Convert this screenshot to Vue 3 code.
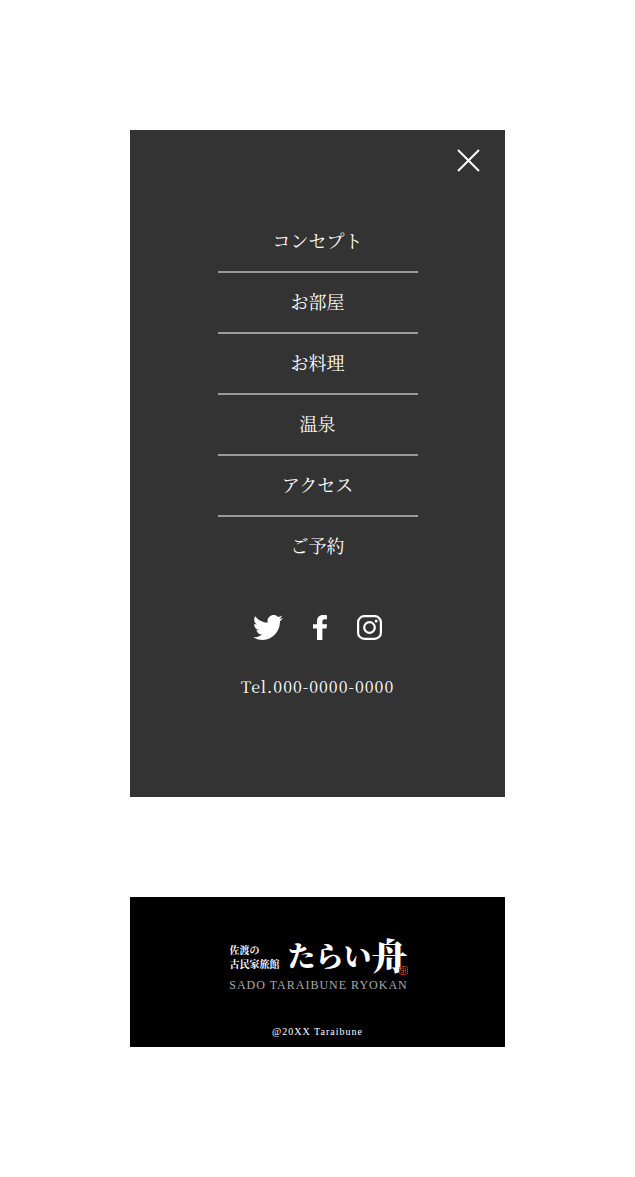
<script setup>
const menu = ['コンセプト', 'お部屋', 'お料理', '温泉', 'アクセス', 'ご予約']
</script>

<template>
  <div class="page">
    <div class="panel">
      <header class="bar">
        <button class="close" type="button" aria-label="閉じる">
          <svg width="24" height="24" viewBox="0 0 24 24" aria-hidden="true">
            <path d="M1 1 L22 22 M22 1 L1 22" stroke="#fff" stroke-width="2" fill="none" />
          </svg>
        </button>
      </header>
      <nav>
        <ul class="menu">
          <li v-for="item in menu" :key="item"><a href="#">{{ item }}</a></li>
        </ul>
      </nav>
      <div class="social">
        <a href="#" aria-label="Twitter">
          <svg width="30" height="25" viewBox="0 2.2 24 19.6" preserveAspectRatio="none" aria-hidden="true">
            <path fill="#fff" d="M23.953 4.57a10 10 0 01-2.825.775 4.958 4.958 0 002.163-2.723c-.951.555-2.005.959-3.127 1.184a4.92 4.92 0 00-8.384 4.482C7.69 8.095 4.067 6.13 1.64 3.162a4.822 4.822 0 00-.666 2.475c0 1.71.87 3.213 2.188 4.096a4.904 4.904 0 01-2.228-.616v.06a4.923 4.923 0 003.946 4.827 4.996 4.996 0 01-2.212.085 4.936 4.936 0 004.604 3.417 9.867 9.867 0 01-6.102 2.105c-.39 0-.779-.023-1.17-.067a13.995 13.995 0 007.557 2.209c9.053 0 13.998-7.496 13.998-13.985 0-.21 0-.42-.015-.63A9.935 9.935 0 0024 4.59z" />
          </svg>
        </a>
        <a href="#" aria-label="Facebook">
          <svg width="14" height="25" viewBox="0 0 14 25" aria-hidden="true">
            <path fill="#fff" d="M4 25V13.6H0V9.2h4V6.6C4 2.3 6.3 0 10 0c1.700 0 3.300.1 4 .2v4.100h-2C10 4.300 9.400 5.200 9.400 6.700v2.500H14l-.5 4.400H9.400V25z" />
          </svg>
        </a>
        <a href="#" aria-label="Instagram">
          <svg width="25" height="25" viewBox="0 0 25 25" fill="none" stroke="#fff" aria-hidden="true">
            <rect x="1.1" y="1.1" width="22.8" height="22.8" rx="6.200" stroke-width="2.200" />
            <circle cx="12.500" cy="12.500" r="5.300" stroke-width="2.200" />
            <circle cx="19.200" cy="5.900" r="1.500" fill="#fff" stroke="none" />
          </svg>
        </a>
      </div>
      <a class="tel" href="tel:00000000000">Tel.000-0000-0000</a>
    </div>

    <footer class="footer">
      <a class="logo" href="#">
        <span class="row">
          <span class="lead">佐渡の<br>古民家旅館</span>
          <span class="brush"><span>たらい</span><span class="boat">舟</span></span>
          <svg class="seal" width="9" height="9" viewBox="0 0 9 9" fill="none" stroke="#a8331a" aria-hidden="true">
            <rect x=".5" y=".5" width="8" height="8" rx="2" />
            <path d="M2 2.500h2M2 4.500h5M2 6.500h2M4.500 1v7M6.500 2v5" stroke-width=".8" />
          </svg>
        </span>
        <span class="roman">SADO TARAIBUNE RYOKAN</span>
      </a>
      <small class="copy">@20XX Taraibune</small>
    </footer>
  </div>
</template>

<style>
body {
  margin: 0;
  background: #fff;
}
</style>

<style scoped>
.page {
  display: flex;
  flex-direction: column;
  gap: 100px;
  padding: 130px;
  font-family: "Noto Serif CJK JP", "Liberation Serif", "Noto Sans CJK JP", serif;
  color: #fff;
}
a {
  color: inherit;
  text-decoration: none;
}
.panel {
  display: flex;
  flex-direction: column;
  align-items: center;
  padding-bottom: 100px;
  background: #333;
}
.bar {
  display: flex;
  justify-content: flex-end;
  align-self: stretch;
  padding: 19px 24px 39px;
}
.close {
  display: flex;
  padding: 0;
  border: 0;
  background: none;
  cursor: pointer;
}
.menu {
  width: 200px;
  margin: 0;
  padding: 0;
  list-style: none;
}
.menu li + li {
  border-top: 2px solid #999;
}
.menu a {
  display: block;
  padding-bottom: 2px;
  font-size: 18px;
  line-height: 57px;
  text-align: center;
}
.social {
  display: flex;
  gap: 30px;
  margin-top: 39px;
}
.social a {
  display: flex;
}
.tel {
  margin-top: 37px;
  font-size: 16px;
  line-height: 20px;
  letter-spacing: 1px;
}
.footer {
  display: flex;
  flex-direction: column;
  align-items: center;
  padding: 38px 0 8px;
  background: #000;
}
.logo {
  display: flex;
  flex-direction: column;
  align-items: center;
  padding-left: 2px;
}
.row {
  position: relative;
  display: flex;
  align-items: center;
  gap: 8px;
}
.lead {
  padding-top: 4px;
  font-size: 10px;
  line-height: 14px;
  font-weight: 700;
}
.brush {
  display: flex;
  align-items: center;
  font-size: 28px;
  line-height: 40px;
  font-weight: 900;
}
.boat {
  font-size: 36px;
}
.seal {
  position: absolute;
  right: 0;
  bottom: 0;
}
.roman {
  font-family: "Liberation Serif", serif;
  font-size: 12px;
  line-height: 20px;
  letter-spacing: 1px;
  color: #aaa;
}
.copy {
  margin-top: 29px;
  font-family: "Liberation Serif", serif;
  font-size: 10px;
  line-height: 15px;
  letter-spacing: 1px;
}
</style>
